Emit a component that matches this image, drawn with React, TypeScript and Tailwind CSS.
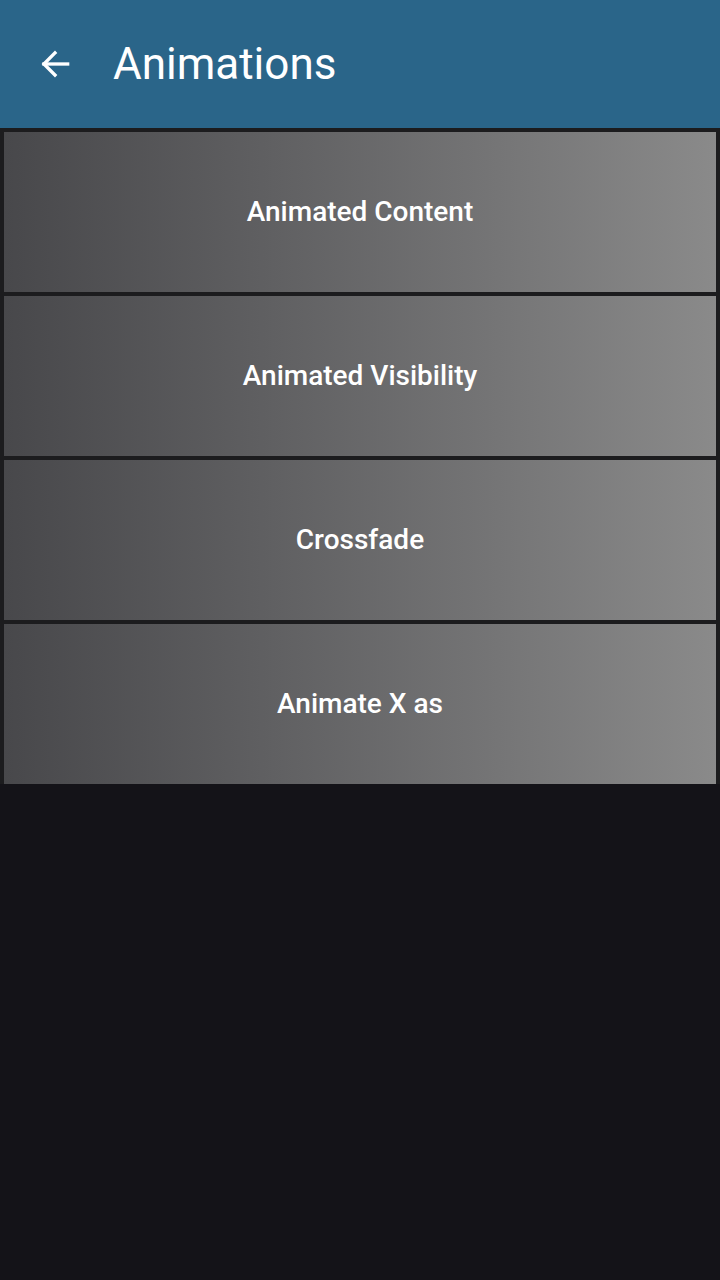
import React from "react";

const items = ["Animated Content", "Animated Visibility", "Crossfade", "Animate X as"];

function BackArrow() {
  return (
    <svg width="38" height="38" viewBox="0 0 24 24" fill="none" stroke="white" strokeWidth="2.1" strokeLinecap="square">
      <path d="M20 12H5" />
      <path d="M12 5l-7 7 7 7" />
    </svg>
  );
}

export default function App() {
  return (
    <div className="min-h-[1280px] w-[720px] bg-[#141318] font-['Roboto',sans-serif]">
      <div className="flex h-[128px] items-center bg-[#2a6589] pl-[36px]">
        <BackArrow />
        <span className="ml-[39px] text-[44px] leading-none text-white">Animations</span>
      </div>
      <div className="flex flex-col gap-[4px] bg-[#1c1c1e] px-[4px] pt-[4px]">
        {items.map((label) => (
          <div
            key={label}
            className="flex h-[160px] items-center justify-center bg-gradient-to-r from-[#48484b] to-[#8a8a8a]"
          >
            <span className="text-[28px] font-medium text-white">{label}</span>
          </div>
        ))}
      </div>
    </div>
  );
}
